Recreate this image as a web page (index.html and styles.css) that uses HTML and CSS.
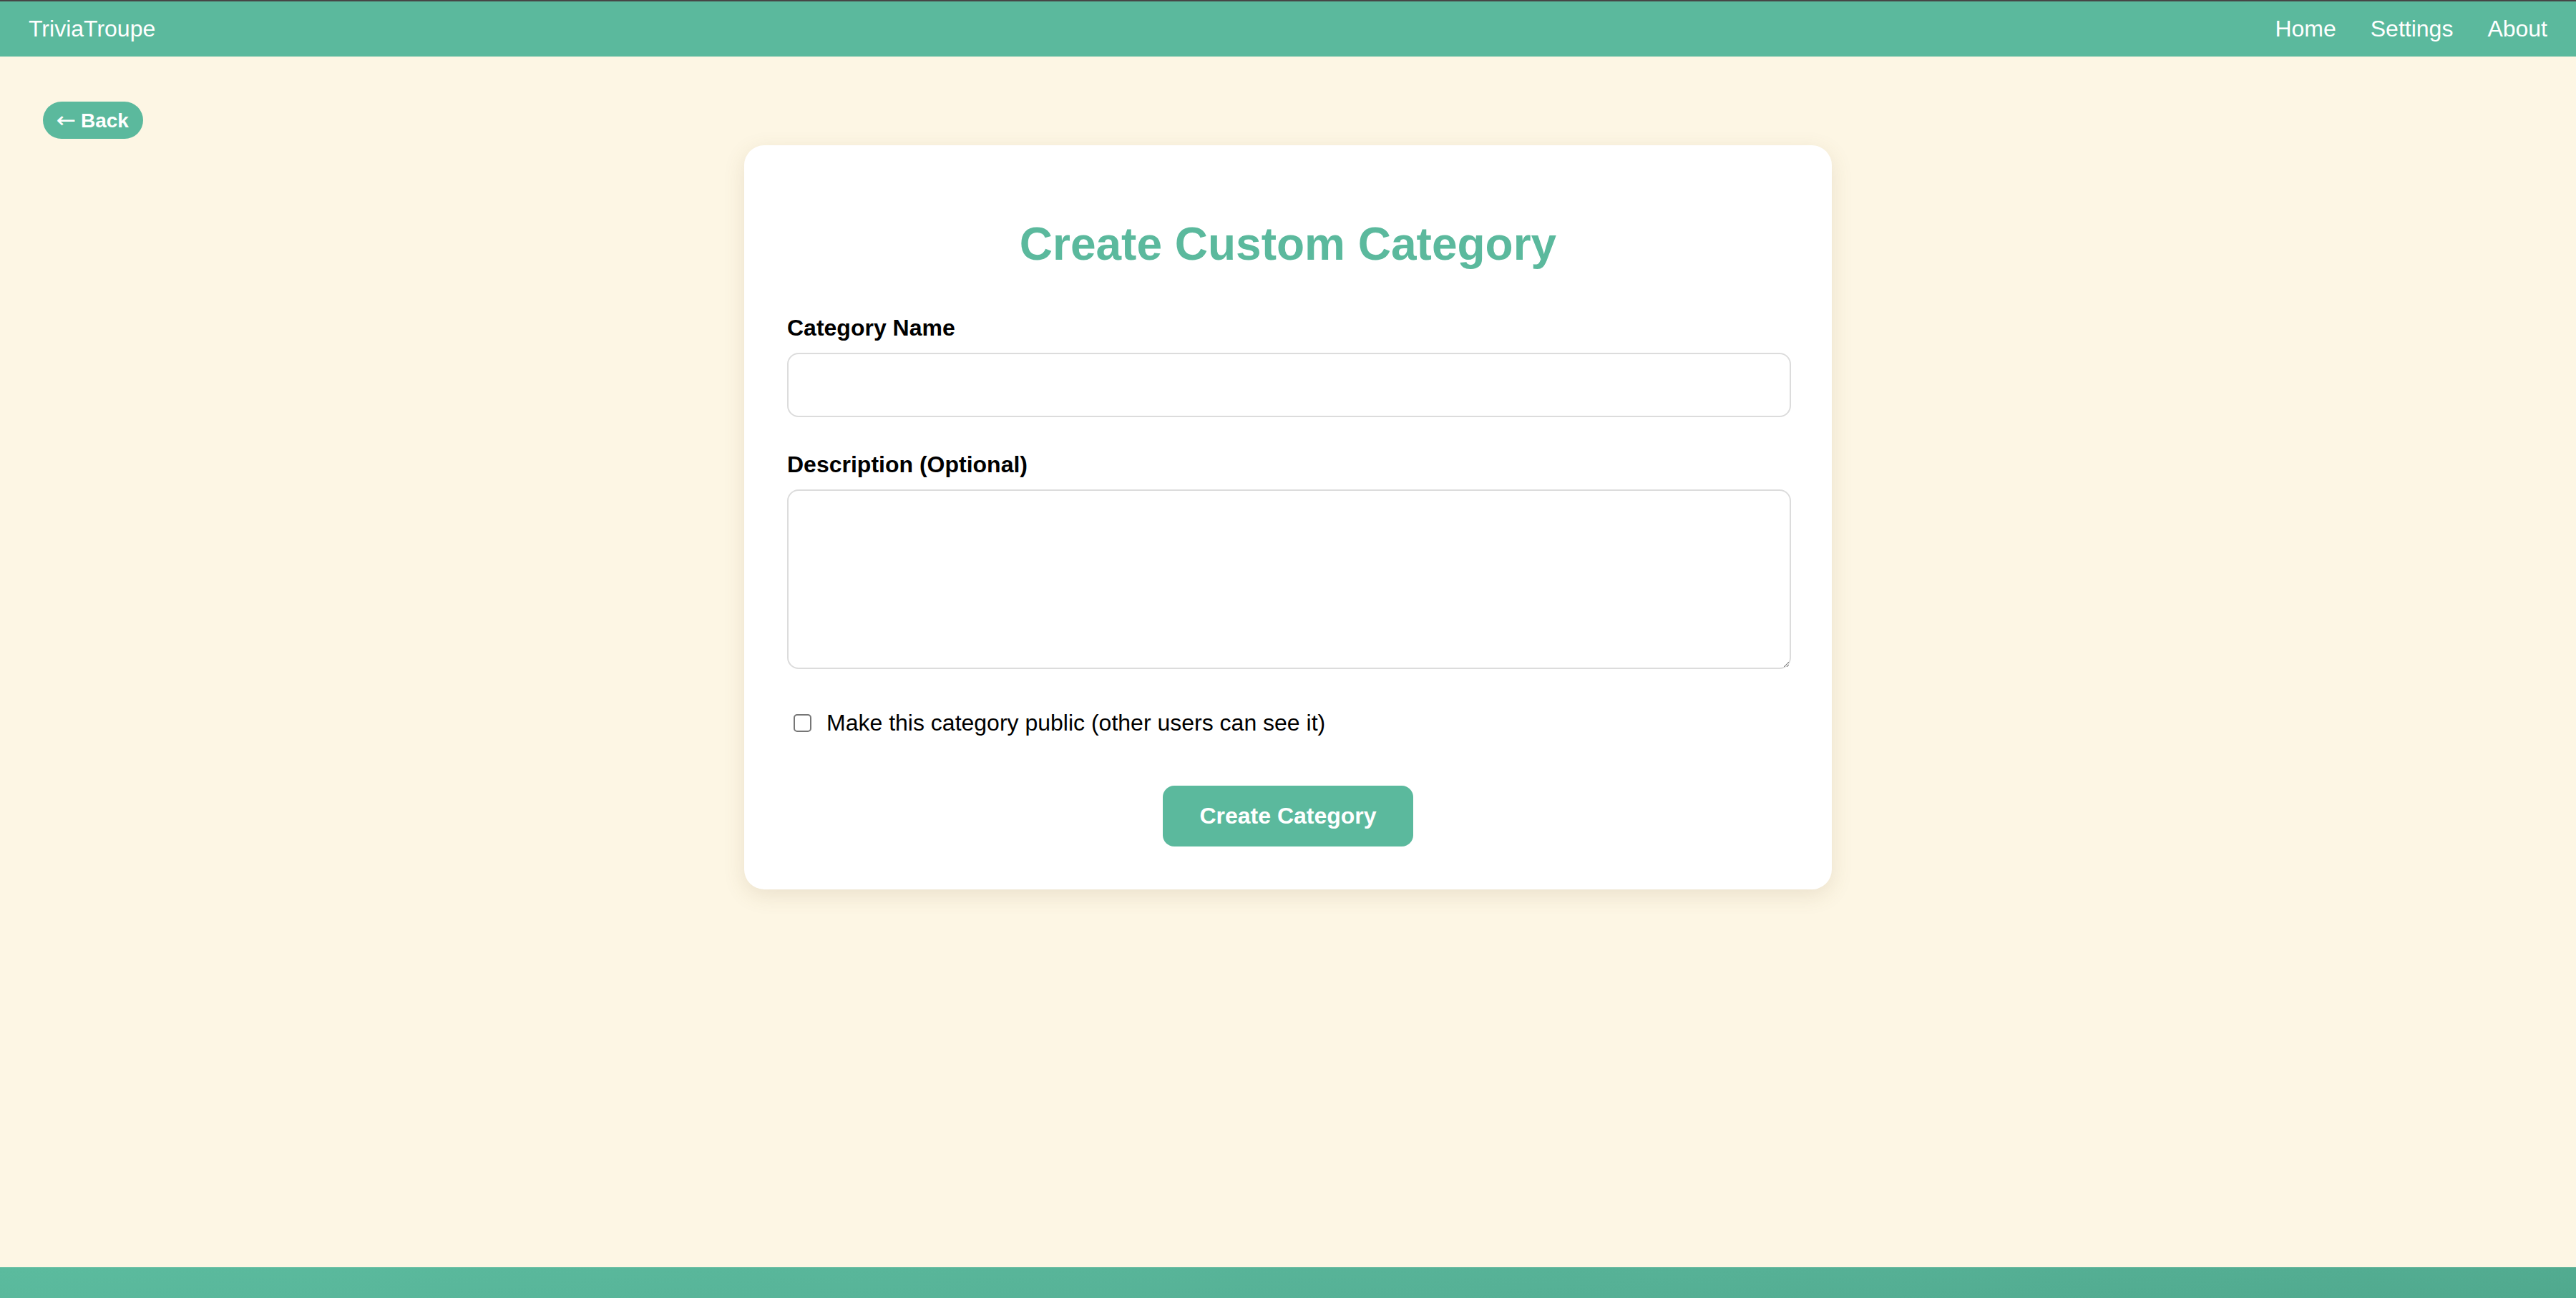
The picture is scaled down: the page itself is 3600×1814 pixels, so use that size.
FILE: index.html
```html
<!DOCTYPE html>
<html lang="en">
<head>
<meta charset="utf-8">
<title>TriviaTroupe - Create Custom Category</title>
<link rel="stylesheet" href="styles.css">
</head>
<body>
<header class="navbar">
  <a class="brand" href="#">TriviaTroupe</a>
  <nav class="nav-links">
    <a href="#">Home</a>
    <a href="#">Settings</a>
    <a href="#">About</a>
  </nav>
</header>
<main class="main">
  <a class="back-btn" href="#"><span class="back-arrow">←</span> Back</a>
  <section class="card">
    <h1 class="card-title">Create Custom Category</h1>
    <form class="form">
      <div class="form-group">
        <label class="form-label" for="name">Category Name</label>
        <input class="form-input" id="name" type="text">
      </div>
      <div class="form-group">
        <label class="form-label" for="desc">Description (Optional)</label>
        <textarea class="form-textarea" id="desc"></textarea>
      </div>
      <label class="check-row">
        <input class="check-box" type="checkbox">
        <span>Make this category public (other users can see it)</span>
      </label>
      <div class="actions">
        <button class="submit-btn" type="button">Create Category</button>
      </div>
    </form>
  </section>
</main>
<footer class="footer"></footer>
</body>
</html>
```

FILE: styles.css
```css
* { box-sizing: border-box; }

html, body { height: 100%; }

body {
  margin: 0;
  min-height: 100vh;
  display: flex;
  flex-direction: column;
  background: #fdf6e4;
  font-family: "Liberation Sans", Arial, Helvetica, sans-serif;
  color: #000;
}

.navbar {
  display: flex;
  align-items: center;
  justify-content: space-between;
  background: #5bb99d;
  border-top: 2px solid #464646;
  padding: 20px 40px;
  height: 79px;
}

.brand {
  color: #fff;
  text-decoration: none;
  font-size: 32px;
  line-height: 37px;
}

.nav-links { display: flex; gap: 48px; }

.nav-links a {
  color: #fff;
  text-decoration: none;
  font-size: 32px;
  line-height: 37px;
}

.main {
  flex: 1;
  padding: 63px 60px 0;
  display: flex;
  flex-direction: column;
}

.back-btn {
  align-self: flex-start;
  background: #5bb99d;
  color: #fff;
  text-decoration: none;
  font-weight: bold;
  font-size: 28px;
  line-height: 33px;
  padding: 9px 20px;
  border-radius: 999px;
}

.back-arrow {
  font-family: "DejaVu Sans", sans-serif;
  font-weight: normal;
  font-size: 30px;
  display: inline-block;
  transform: scaleX(1.1);
}

.card {
  width: 1520px;
  align-self: center;
  margin-top: 9px;
  background: #fff;
  border-radius: 28px;
  padding: 60px;
  box-shadow: 0 8px 30px rgba(120, 100, 60, 0.14);
}

.card-title {
  margin: 41px 0 62px;
  text-align: center;
  color: #5bb99d;
  font-size: 64px;
  line-height: 74px;
  font-weight: bold;
}

.form { display: flex; flex-direction: column; }

.form-group { margin-bottom: 48px; display: flex; flex-direction: column; }

.form-label {
  font-weight: bold;
  font-size: 32px;
  line-height: 37px;
  margin-bottom: 16px;
}

.form-input,
.form-textarea {
  width: 1403px;
  border: 2px solid #dcdcdc;
  border-radius: 16px;
  padding: 24px;
  font-family: inherit;
  font-size: 32px;
  background: #fff;
}

.form-input { height: 90px; }

.form-textarea { height: 251px; }

.check-row {
  display: flex;
  align-items: center;
  margin-top: 9px;
  height: 37px;
  font-size: 32px;
  line-height: 37px;
}

.check-box {
  appearance: none;
  -webkit-appearance: none;
  width: 25px;
  height: 25px;
  margin: 0 21px 0 9px;
  border: 2px solid #767676;
  border-radius: 5px;
  background: #fff;
}

.actions {
  display: flex;
  justify-content: center;
  margin-top: 69px;
}

.submit-btn {
  background: #5bb99d;
  color: #fff;
  border: none;
  border-radius: 16px;
  font-family: inherit;
  font-weight: bold;
  font-size: 32px;
  line-height: 37px;
  padding: 24px 51px;
  height: 85px;
}

.footer {
  height: 43px;
  background: linear-gradient(175deg, #5bbb9e 0%, #56b196 60%, #50a98e 100%);
}
```
